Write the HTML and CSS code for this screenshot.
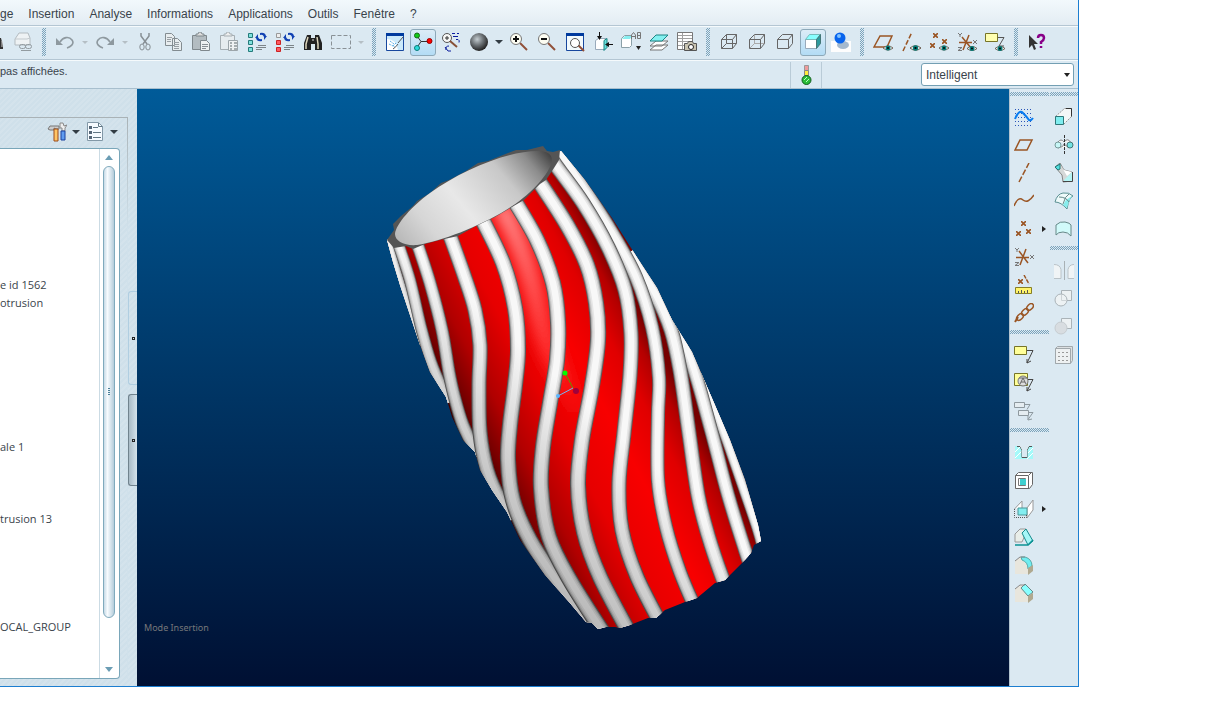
FILE: index.html
```html
<!DOCTYPE html>
<html lang="fr">

<head>
  <meta charset="UTF-8">
  <title>Mode Insertion</title>
  <link rel="stylesheet" href="styles.css">
</head>

<body>

  <svg class="defs" aria-hidden="true">
    <symbol id="eye" viewBox="0 0 12 8">
      <path d="M0 4Q6 -1 12 4Q6 9 0 4z" fill="#fff" stroke="#5c4a3c" />
      <circle cx="6" cy="4" r="3" fill="#087c78" />
      <rect x="5" y="3" width="2" height="2" fill="#000" />
    </symbol>
    <symbol id="cross" viewBox="0 0 5 5">
      <path d="M0 0L5 5M5 0L0 5" stroke="#9a5524" stroke-width="1.6" />
    </symbol>
  </svg>

  <div class="app">
    <nav class="menu">
      <a href="#">ge</a>
      <a href="#">Insertion</a>
      <a href="#">Analyse</a>
      <a href="#">Informations</a>
      <a href="#">Applications</a>
      <a href="#">Outils</a>
      <a href="#">Fenêtre</a>
      <a href="#">?</a>
    </nav>

    <div class="toolbar">
      <button aria-label="Imprimer"><svg class="icon" viewBox="0 0 20 20"><path d="M12 6l4 0l2 8v3h-6z" fill="#333" /><path d="M17 9v6" stroke="#ccc" /></svg></button>
      <button aria-label="Envoyer un lien"><svg class="icon" viewBox="0 0 20 20"><path d="M2 7L6 1h9l2 5v7H2z" fill="#eef2f4" stroke="#b3bbc0" /><path d="M2 7h12l3-1" stroke="#c2c9cd" fill="none" /><rect x="6.500" y="12.500" width="6" height="4" rx="2" fill="none" stroke="#929ba0" /><rect x="12.500" y="12.500" width="6" height="4" rx="2" fill="none" stroke="#929ba0" /><path d="M8 18.500h10" stroke="#929ba0" /></svg></button>
      <span class="sep"></span>
      <button aria-label="Annuler"><svg class="icon" viewBox="0 0 20 20"><path d="M1 6v7h7z" fill="#8e999f" /><path d="M5 10C8 5 14 4 17 8C20 12 15 15 12 16" stroke="#8e999f" stroke-width="1.6" fill="none" /></svg></button>
      <button class="drop off" aria-label="Liste annuler"></button>
      <button aria-label="Rétablir"><svg class="icon" viewBox="0 0 20 20"><path d="M19 6v7h-7z" fill="#8e999f" /><path d="M15 10C12 5 6 4 3 8C0 12 5 15 8 16" stroke="#8e999f" stroke-width="1.6" fill="none" /></svg></button>
      <button class="drop off" aria-label="Liste rétablir"></button>
      <button aria-label="Couper"><svg class="icon" viewBox="0 0 20 20"><path d="M6 1v3l6 8M14 1v3l-6 8" stroke="#878f94" stroke-width="1.5" fill="none" /><ellipse cx="7" cy="15" rx="2.2" ry="3" fill="none" stroke="#878f94" /><ellipse cx="13" cy="15" rx="2.2" ry="3" fill="none" stroke="#878f94" /></svg></button>
      <button aria-label="Copier"><svg class="icon" viewBox="0 0 20 20"><path d="M2.500 1.500h6l3 3v9h-9zM9.500 6.500h5l4 4v8h-9z" fill="#e8edef" stroke="#838c91" /><path d="M4 5.500h5M4 7.500h4M4 9.500h4M11 10.500h5M11 12.500h5M11 14.500h5M11 16.500h5" stroke="#989fa4" /></svg></button>
      <button aria-label="Coller"><svg class="icon" viewBox="0 0 20 20"><path d="M1.500 3.500h14v14h-14z" fill="#b3bcc1" stroke="#7f888d" /><path d="M5 4V2h2l1-2h2l1 2h2v2z" fill="#ddd" stroke="#7f888d" /><path d="M9.500 8.500h6l3 3v7h-9z" fill="#eef1f2" stroke="#7f888d" /><path d="M11 12.500h6M11 14.500h6M11 16.500h4" stroke="#888f94" /></svg></button>
      <button aria-label="Collage spécial"><svg class="icon" viewBox="0 0 20 20"><path d="M1.500 3.500h14v14h-14z" fill="#e6ecef" stroke="#a5aeb3" /><path d="M5 4V2h2l1-2h2l1 2h2v2z" fill="#eee" stroke="#a5aeb3" /><path d="M9.500 8.500h9v10h-9z" fill="#eef1f2" stroke="#9ca5aa" /><path d="M11 11h2M15 11h3M11 14h2M15 14h3M11 17h2M15 17h3" stroke="#5d686d" /></svg></button>
      <button aria-label="Régénérer"><svg class="icon" viewBox="0 0 20 20"><path d="M1.500 1.500h4v4h-4zM1.500 8.500h4v4h-4zM1.500 15.500h4v4h-4z" fill="#7fe0dd" stroke="#247b7b" /><path d="M11 13.500h8M9 15.500h10M9 17.500h6" stroke="#7c8488" /><path d="M8 6l3-4v3q1 3 4 2v2q-5 1-6-3zM20 4l-3 4V5q-1-3-4-2V1q5-1 6 3z" fill="#1141b3" /></svg></button>
      <button aria-label="Gestionnaire de régénération"><svg class="icon" viewBox="0 0 20 20"><path d="M1.500 1.500h4v4h-4z" fill="#eee" stroke="#999" /><path d="M1.500 8.500h4v4h-4zM1.500 15.500h4v4h-4z" fill="#ff5960" stroke="#c22" /><path d="M11 13.500h8M9 15.500h10M9 17.500h6" stroke="#7c8488" /><path d="M8 6l3-4v3q1 3 4 2v2q-5 1-6-3zM20 4l-3 4V5q-1-3-4-2V1q5-1 6 3z" fill="#1141b3" /></svg></button>
      <button aria-label="Rechercher"><svg class="icon" viewBox="0 0 20 20"><path d="M4 3h4v3h4V3h4l3 8v7h-7v-6H8v6H1v-7z" fill="#222" /><path d="M5 5l-2 7v5M14 5l1 7v5" stroke="#ddd6bd" stroke-width="1.500" fill="none" /><path d="M9 8h2" stroke="#ddd" /></svg></button>
      <button aria-label="Sélectionner"><svg class="icon" viewBox="0 0 20 20"><rect x=".5" y="3.500" width="19" height="13" fill="none" stroke="#899196" stroke-dasharray="4 2" /></svg></button>
      <button class="drop off" aria-label="Modes de sélection"></button>
      <span class="sep"></span>

      <button aria-label="Redessiner"><svg class="icon" viewBox="0 0 20 20"><path d="M1.500 1.500h17v17h-17z" fill="#cbe9fb" stroke="#17479e" /><path d="M1 1h18v3H1z" fill="#003a9e" /><path d="M2 7q9 0 11 11H2z" fill="#fff" /><path d="M5 9l4 3M4 12l6 3M11 11l-3 3" stroke="#57aee9" stroke-dasharray="2 1" /><path d="M18 5L13 11M13 12q-2 3-5 5" stroke="#555" fill="none" /></svg></button>
      <button class="on" aria-label="Centre de rotation"><svg class="icon" viewBox="0 0 20 20"><path d="M4 4l4 5.500h8M8 9.500l-4 6" stroke="#333" fill="none" /><circle cx="4" cy="3.500" r="2.500" fill="#13cb19" stroke="#176b17" /><circle cx="16.500" cy="9" r="2.500" fill="#f00" stroke="#900" /><circle cx="4" cy="16" r="2.500" fill="#2cdcdd" stroke="#087c78" /></svg></button>
      <button aria-label="Mode d'orientation"><svg class="icon" viewBox="0 0 20 20"><circle cx="6" cy="6" r="4.500" fill="#f7f7f5" stroke="#555" /><path d="M6 4v4M4 6h4" stroke="#333" /><path d="M9 9l7 6" stroke="#875037" stroke-width="2" /><path d="M11 1.500h3M16 1.500h2M12 4.500h5M15 7.500h2q2 1 1 3M5 18q-1-4 3-4M4 15l3 4h3" stroke="#0c1d9e" fill="none" /></svg></button>
      <button aria-label="Galerie d'apparences"><svg class="icon" viewBox="0 0 20 20"><circle cx="10" cy="10" r="9" fill="url(#ball)" /></svg></button>
      <button class="drop" aria-label="Liste des apparences"></button>
      <button aria-label="Zoom avant"><svg class="icon" viewBox="0 0 20 20"><path d="M11 11l7 7" stroke="#905039" stroke-width="2" /><circle cx="7" cy="7" r="5.500" fill="#fdfdf2" stroke="#777" /><path d="M4 7h6M7 4v6" stroke="#111" stroke-width="2" /></svg></button>
      <button aria-label="Zoom arrière"><svg class="icon" viewBox="0 0 20 20"><path d="M11 11l7 7" stroke="#905039" stroke-width="2" /><circle cx="7" cy="7" r="5.500" fill="#fdfdf2" stroke="#777" /><path d="M4 7h6" stroke="#111" stroke-width="2" /></svg></button>
      <button aria-label="Recadrer"><svg class="icon" viewBox="0 0 20 20"><path d="M1.500 1.500h17v17h-17z" fill="#f2fafd" stroke="#17479e" /><path d="M1 1h18v3H1z" fill="#003a9e" /><path d="M13 13l6 6" stroke="#905039" stroke-width="2" /><circle cx="10" cy="11" r="4.500" fill="#fff" stroke="#555" /></svg></button>
      <button aria-label="Réorienter"><svg class="icon" viewBox="0 0 20 20"><path d="M2.500 8.500l3-2h8v9l-2 2h-9z" fill="#fff" stroke="#9ab" /><path d="M11 8.500l3-2v9l-3 3z" fill="#6ae0dd" stroke="#1b8583" /><path d="M6.500 0v7M13 12.500h7" stroke="#111" /><path d="M4 4h5L6.500 8zM16 10v5l-4-2.500z" fill="#111" /></svg></button>
      <button aria-label="Vues enregistrées"><svg class="icon" viewBox="0 0 20 20"><path d="M.5 6.500l3-3h7v10l-2 2h-8z" fill="#fff" stroke="#8ba0a8" /><path d="M1 7l3-3h7l-2 3z" fill="#88eef0" /><path d="M10.500 7V3l2-2.500 2 2.500v4M10.500 4.500h4M16.500 6.500v-6h3v6zM16.500 3.500h3" stroke="#777" fill="none" /><path d="M15 14h5l-2.500 4z" fill="#222" /></svg></button>
      <button aria-label="Calques"><svg class="icon" viewBox="0 0 20 20"><path d="M1 18l6-5h12l-6 5zM1 14l6-5h12l-6 5z" fill="#fff" stroke="#777" /><path d="M1 9l6-6h12l-6 6z" fill="#85f1f1" stroke="#1c8585" /></svg></button>
      <button aria-label="Gestionnaire de vues"><svg class="icon" viewBox="0 0 20 20"><path d="M.5.500h15v17H.5z" fill="#fff" stroke="#777" /><path d="M1 3.500h14M1 6.500h14M1 9.500h14M1 13.500h14M5.500 1v16" stroke="#a0a0a0" /><path d="M7.500 11.500h3l1-2h4l1 2h3v7h-12z" fill="#c8c3b0" stroke="#555" /><circle cx="14" cy="15" r="2.500" fill="#fff" stroke="#222" /></svg></button>
      <span class="sep"></span>

      <button aria-label="Filaire"><svg class="icon" viewBox="0 0 20 20"><path d="M2.500 7.500h11v9h-11zM7.500 2.500h10v9h-10zM2.500 7.500l5-5M13.500 7.500l4-5M2.500 16.500l5-5M13.500 16.500l4-5" stroke="#666" fill="none" /></svg></button>
      <button aria-label="Lignes cachées"><svg class="icon" viewBox="0 0 20 20"><path d="M7.500 3v8.500h10M3 16l5-5" stroke="#aaa" fill="none" /><path d="M2.500 7.500h11v9h-11zM2.500 7.500l5-5h10v9l-4 5M13.500 7.500l4-5" stroke="#666" fill="none" /></svg></button>
      <button aria-label="Sans lignes cachées"><svg class="icon" viewBox="0 0 20 20"><path d="M2.500 7.500h11v9h-11zM2.500 7.500l5-5h10v9l-4 5M13.500 7.500l4-5" stroke="#666" fill="none" /></svg></button>
      <button class="on" aria-label="Ombrage"><svg class="icon" viewBox="0 0 20 20"><path d="M2.500 7.500h11v9h-11z" fill="#fff" stroke="#9ab" /><path d="M2.500 7.500l4-5h11l-4 5z" fill="#8ff" stroke="#7bb" /><path d="M13.500 7.500l4-5v9l-4 5z" fill="#2d9a9d" stroke="#477" /></svg></button>
      <button aria-label="Réalisme"><svg class="icon" viewBox="0 0 20 20"><path d="M0 9h20v11H0z" fill="#fdfdfd" /><ellipse cx="12" cy="13" rx="6" ry="4" fill="#a4b9ce" /><circle cx="9" cy="6" r="5.500" fill="#0864ed" /><circle cx="8" cy="4" r="2" fill="#7fc2ff" /></svg></button>
      <span class="sep"></span>

      <button aria-label="Plans de référence"><svg class="icon" viewBox="0 0 20 20"><path d="M1 15L7 4h12l-5 11z" fill="none" stroke="#9a5524" stroke-width="1.500" /><use href="#eye" x="10" y="12" width="10" height="8" /></svg></button>
      <button aria-label="Axes"><svg class="icon" viewBox="0 0 20 20"><path d="M2 19L11 0" stroke="#9a5524" stroke-width="1.500" stroke-dasharray="5 2" /><use href="#eye" x="9" y="12" width="11" height="8" /></svg></button>
      <button aria-label="Points"><svg class="icon" viewBox="0 0 20 20"><use href="#cross" x="4" y="1" width="5" height="5" /><use href="#cross" x="13" y="7" width="5" height="5" /><use href="#cross" x="1" y="11" width="5" height="5" /><use href="#eye" x="10" y="12" width="10" height="8" /></svg></button>
      <button aria-label="Repères"><svg class="icon" viewBox="0 0 20 20"><path d="M1 1l2 2 2-2M3 3v2M1 15.500h4l-4 3h4M16 8l4 4M20 8l-4 4" stroke="#777" fill="none" /><path d="M2 10.500h13M5 5l9 11M12 3L6 18" stroke="#9a5524" stroke-width="1.500" /><use href="#eye" x="10" y="13" width="10" height="7" /></svg></button>
      <button aria-label="Annotations"><svg class="icon" viewBox="0 0 20 20"><path d="M.5 1.500h12v8H.5z" fill="#ffffb0" stroke="#777528" /><path d="M13 5.500h6L14 14h5" stroke="#555" fill="none" /><use href="#eye" x="10" y="13" width="10" height="7" /></svg></button>
      <span class="sep"></span>
      <button aria-label="Aide contextuelle"><svg class="icon" viewBox="0 0 20 20"><path d="M2 3v13l3-3 2 5 2-1-2-5h4z" fill="#333" /><path d="M11 6q0-3 3-3t3 3q0 2-3 4v2M14 14v2" stroke="#808" stroke-width="2.500" fill="none" /></svg></button>
    </div>

    <div class="status">
      <p>pas affichées.</p>
      <div class="light">
        <svg class="icon" viewBox="0 0 20 20"><path d="M8.500.500h4v5h-4z" fill="#ee9b9b" stroke="#999" /><path d="M8.500 5.500h4v5h-4z" fill="#ffeb3c" stroke="#888" /><circle cx="10.500" cy="15" r="4.500" fill="#2bbd39" stroke="#115d1e" /><path d="M8 15l3-3M10 17l3-3" stroke="#bdffc1" /></svg>
      </div>
      <div class="filter">
        <select aria-label="Filtre de sélection">
          <option>Intelligent</option>
        </select>
      </div>
    </div>

    <main class="work">
      <aside class="side">
        <div class="side-panel">
          <div class="side-tools">
            <button aria-label="Réglages"><svg class="icon" viewBox="0 0 20 20"><path d="M1 7l2-3h9v3H9l-2-1v2H3z" fill="#ccc" stroke="#777" /><path d="M7 7h4v12H7z" fill="#ffc565" stroke="#9b4a1b" /><path d="M13 1v5h2v3h3V6l2-3-3 1-1-3z" fill="#eee" stroke="#888" /><path d="M14 9h4v9h-4z" fill="#5f9cf0" stroke="#1b419d" /></svg></button>
            <button class="drop" aria-label="Liste des réglages"></button>
            <button aria-label="Afficher"><svg class="icon" viewBox="0 0 20 20"><path d="M2.500.500h11l4 4v14h-15z" fill="#f6fbff" stroke="#8298a7" /><path d="M13.500 1v3.500h4M8 5.500h5M8 10.500h8M8 15.500h8" stroke="#607784" fill="none" /><path d="M4 4h3v3H4zM4 9h3v3H4zM4 14h3v3H4z" fill="#567" /></svg></button>
            <button class="drop" aria-label="Liste afficher"></button>
          </div>
          <div class="tree">
            <ul>
              <li>e id 1562</li>
              <li>otrusion</li>
              <li>ale 1</li>
              <li>trusion 13</li>
              <li>OCAL_GROUP</li>
            </ul>
            <div class="scroll">
              <button class="up" aria-label="Monter"></button>
              <div class="thumb"><span></span></div>
              <button class="down" aria-label="Descendre"></button>
            </div>
          </div>
        </div>
        <div class="grips">
          <button aria-label="Ouvrir le volet"></button>
          <button class="dark" aria-label="Fermer le volet"></button>
        </div>
      </aside>

      <svg class="view" viewBox="137 89 872 597" role="img" aria-label="Gobelet torsadé rouge et blanc">
        <defs>
          <radialGradient id="ball" cx=".4" cy=".35" r=".65">
            <stop offset="0" stop-color="#c4ccd0" />
            <stop offset=".5" stop-color="#6d7377" />
            <stop offset="1" stop-color="#222" />
          </radialGradient>
          <linearGradient id="red" gradientUnits="userSpaceOnUse" x1="435" y1="388" x2="626" y2="287">
            <stop offset="0" stop-color="#300" />
            <stop offset=".1" stop-color="#700" />
            <stop offset=".22" stop-color="#b00000" />
            <stop offset=".42" stop-color="#e60000" />
            <stop offset=".65" stop-color="#f80000" />
            <stop offset=".82" stop-color="#e00000" />
            <stop offset=".93" stop-color="#b40000" />
            <stop offset="1" stop-color="#700" />
          </linearGradient>
          <linearGradient id="hole" gradientUnits="userSpaceOnUse" x1="410" y1="260" x2="548" y2="145">
            <stop offset="0" stop-color="#b5b5b5" />
            <stop offset=".2" stop-color="#d6d6d6" />
            <stop offset=".42" stop-color="#e8e8e8" />
            <stop offset=".7" stop-color="#c8c8c8" />
            <stop offset=".86" stop-color="#8c8c8c" />
            <stop offset="1" stop-color="#333" />
          </linearGradient>
          <linearGradient id="shade" gradientUnits="userSpaceOnUse" x1="450" y1="500" x2="560" y2="380">
            <stop offset="0" stop-color="#000" stop-opacity=".26" />
            <stop offset=".5" stop-color="#000" stop-opacity=".14" />
            <stop offset="1" stop-color="#000" stop-opacity="0" />
          </linearGradient>
          <linearGradient id="shine" gradientUnits="userSpaceOnUse" x1="0" y1="205" x2="0" y2="430">
            <stop offset="0" stop-color="#ff8c8c" />
            <stop offset=".4" stop-color="#ff5050" />
            <stop offset=".7" stop-color="#ff2828" />
            <stop offset="1" stop-color="#ff1010" stop-opacity="0" />
          </linearGradient>
          <filter id="soft" x="-50%" y="-50%" width="200%" height="200%">
            <feGaussianBlur stdDeviation="7" />
          </filter>
          <clipPath id="cup">
            <path d="M387 240L393 262L400 285L410 315L420 345L430 372L446 397L452 417L463 440L475 452L480 470L492 490L507 512L520 540L545 575L570 603L586 622L592 623L598 629L606 627L615 627L620 628L630 625L648 618L656 618L665 610L685 602L697 598L715 583L725 580L730 575L743 562L751 553L754 545L761 541L758 525L745 480L730 440L705 382L692 352L672 320L657 288L640 262L612 218L585 180L561 151z" />
          </clipPath>
        </defs>
        <g clip-path="url(#cup)">
          <path fill="url(#red)" d="M380 140H770V640H380z" />
          <path class="glow" d="M500 205Q526 250 538 310T590 430" filter="url(#soft)" />
          <g id="ribs"></g>
        </g>
        <path fill="#555" d="M387 240L394 230L393 224L401 216L413 206L417 201L430 193L441 183L449 180L466 171L478 163L488 161L508 153L516 150L527 150L543 146L547 151L553 152L560 150L559 160L554 168L546 180L540 184L524 200L512 207L495 217L476 226L458 236L440 240L425 244L413 249L406 246L394 248z" />
        <path fill="url(#hole)" d="M395 234C396 224 412 206 430 193C463 169 510 150 540 151C552 152 553 158 551 164C547 177 528 197 506 210C478 227 442 241 417 245C404 246 395 241 395 234z" />
        <path d="M565 373L573 388" stroke="#5b9a00" />
        <path d="M558 396L573 388" stroke="#74b6f5" />
        <circle cx="565" cy="373" r="2.500" fill="#0f0" />
        <circle cx="558" cy="396" r="2" fill="#5cb6ff" />
        <circle cx="576" cy="391" r="3" fill="#a0003c" />
        <text class="mode" x="144" y="631">Mode Insertion</text>
      </svg>

      <div class="tools-right">
        <div class="col">
          <span class="hsep"></span>
          <div class="tool"><button aria-label="Style"><svg class="icon" viewBox="0 0 20 20"><path d="M1 2.500h18M1 6.500h18M1 10.500h18M1 14.500h18M1 18.500h18" stroke="#2955b8" stroke-dasharray="1 2" /><path d="M1 12Q5 2 9 6T15 13Q17 14 19 11" stroke="#087cf0" stroke-width="2" fill="none" /></svg></button></div>
          <div class="tool"><button aria-label="Plan de référence"><svg class="icon" viewBox="0 0 20 20"><path d="M1 15L6 5h12l-5 10z" fill="none" stroke="#9a5524" stroke-width="1.500" /></svg></button></div>
          <div class="tool"><button aria-label="Axe de référence"><svg class="icon" viewBox="0 0 20 20"><path d="M5 19L15 0" stroke="#9a5524" stroke-width="1.500" stroke-dasharray="6 2" /></svg></button></div>
          <div class="tool"><button aria-label="Esquisse"><svg class="icon" viewBox="0 0 20 20"><path d="M0 15Q4 5 9 9T20 4" stroke="#9a5524" stroke-width="1.500" fill="none" /></svg></button></div>
          <div class="tool"><button aria-label="Point de référence"><svg class="icon" viewBox="0 0 20 20"><use href="#cross" x="7" y="2" width="5" height="5" /><use href="#cross" x="2" y="12" width="5" height="5" /><use href="#cross" x="12" y="10" width="5" height="5" /></svg></button><button class="more" aria-label="Autres points"></button></div>
          <div class="tool"><button aria-label="Repère"><svg class="icon" viewBox="0 0 20 20"><path d="M1 1l2 2 2-2M3 3v2M1 15.500h4l-4 3h4M16 8l4 4M20 8l-4 4" stroke="#777" fill="none" /><path d="M2 10.500h13M5 4l9 12M12 2L6 18" stroke="#9a5524" stroke-width="1.500" /></svg></button></div>
          <div class="tool"><button aria-label="Analyse"><svg class="icon" viewBox="0 0 20 20"><use href="#cross" x="4" y="4" width="5" height="5" /><path d="M10 0l5 9" stroke="#9a5524" stroke-width="1.500" stroke-dasharray="4 1" /><path d="M1.500 12.500h16v6h-16z" fill="#fff46a" stroke="#877f25" /><path d="M4.500 18v-2M7.500 18v-3M10.500 18v-2M13.500 18v-3" stroke="#555" /></svg></button></div>
          <div class="tool"><button aria-label="Référence"><svg class="icon" viewBox="0 0 20 20"><path d="M1 19l3-5" stroke="#9a5524" stroke-width="2" /><g fill="none" stroke="#9a5524" stroke-width="1.500"><ellipse cx="6" cy="14" rx="4" ry="2.500" transform="rotate(-45 6 14)" /><ellipse cx="11" cy="9" rx="4" ry="2.500" transform="rotate(-45 11 9)" /><ellipse cx="16" cy="4" rx="4" ry="2.500" transform="rotate(-45 16 4)" /></g></svg></button></div>
          <span class="hsep"></span>
          <div class="tool"><button aria-label="Note"><svg class="icon" viewBox="0 0 20 20"><path d="M.5 1.500h12v8H.5z" fill="#ffff99" stroke="#777528" /><path d="M13 5.500h6L13 18M13 14v4l4-2" stroke="#444" fill="none" /></svg></button></div>
          <div class="tool"><button aria-label="Annotation"><svg class="icon" viewBox="0 0 20 20"><path d="M.5.500h13v12H.5z" fill="#ffff99" stroke="#777528" /><circle cx="9" cy="8" r="5" fill="#ddd" stroke="#777" /><path d="M6 11l3-6 3 6M7 9h4M5 5h8" stroke="#666" fill="none" /><path d="M14 6.500h5L13 18M13 14v4l4-2" stroke="#444" fill="none" /></svg></button></div>
          <div class="tool"><button aria-label="Propager"><svg class="icon" viewBox="0 0 20 20"><path d="M.5 1.500h10v5H.5zM4.500 9.500h10v5h-10z" fill="#e5edf1" stroke="#8e999f" /><path d="M11 3.500h5l-3 5M15 11.500h4l-5 7M14 15v4l4-1" stroke="#8e999f" fill="none" /></svg></button></div>
          <span class="hsep"></span>
          <div class="tool"><button aria-label="Perçage"><svg class="icon" viewBox="0 0 20 20"><path d="M1 3h18v13H1z" fill="#a5fafa" /><path d="M1 9l6-6M1 15l7-7M14 10l5-5M13 16l6-6" stroke="#fff" /><path d="M3 3.500h3l2 4v7h5v-7l2-4h3" fill="none" stroke="#555" /><path d="M6 3h9l-2 4v7H8V7z" fill="#dbe9f1" /></svg></button></div>
          <div class="tool"><button aria-label="Coque"><svg class="icon" viewBox="0 0 20 20"><path d="M1.500 4.500l3-3h14v12l-3 4h-14z" fill="#fff" stroke="#666" /><path d="M1.500 4.500h13v13M15 4l3-3" stroke="#666" fill="none" /><path d="M4.500 7.500h7v7h-7z" fill="#fff" stroke="#777" /><path d="M6 8h6v6H6z" fill="#3fd0d0" /></svg></button></div>
          <div class="tool"><button aria-label="Nervure"><svg class="icon" viewBox="0 0 20 20"><path d="M.5 10L8 2v7M13 9l6-8v10l-6 8z" fill="#fff" stroke="#999" /><path d="M4 9h9v7H4z" fill="#83eef0" stroke="#4b9698" /><path d="M.5 10v8.500h12V16" fill="none" stroke="#555" stroke-dasharray="1 1" /></svg></button><button class="more" aria-label="Autres nervures"></button></div>
          <div class="tool"><button aria-label="Dépouille"><svg class="icon" viewBox="0 0 20 20"><path d="M1 7l5-5h6v4l-4 9H1z" fill="#e9eee9" stroke="#999" /><path d="M8 6l4-4 7 12-5 4z" fill="#a6f7f7" stroke="#178a8c" /><path d="M1 18h13l5-5" stroke="#0b9294" stroke-width="1.500" fill="none" /></svg></button></div>
          <div class="tool"><button aria-label="Arrondi"><svg class="icon" viewBox="0 0 20 20"><path d="M1 6l5-4h6q7 2 7 12l-5 5H1z" fill="#e8e6dd" /><path d="M7 2h4q7 2 7 9l-4 3q0-7-6-9z" fill="#70edf0" stroke="#5aa" /><path d="M14 13l5-3v6l-5 4z" fill="#b0a990" /><path d="M1 6l5-4h5" stroke="#888" fill="none" /></svg></button></div>
          <div class="tool"><button aria-label="Chanfrein"><svg class="icon" viewBox="0 0 20 20"><path d="M1 6l5-4h6l7 8v5l-5 4H1z" fill="#e8e6dd" /><path d="M7 5l4-4 8 8-5 4z" fill="#8ff" stroke="#688" /><path d="M14 13l5-3v6l-5 4z" fill="#b0a990" /><path d="M1 6l5-4h5" stroke="#888" fill="none" /></svg></button></div>
        </div>
        <div class="col">
          <span class="hsep"></span>
          <div class="tool"><button aria-label="Extrusion"><svg class="icon" viewBox="0 0 20 20"><path d="M1.500 9.500l9-8h7v8l-8 8z" fill="#f4f7f7" stroke="#999" stroke-dasharray="2 1" /><path d="M12 1.500h5.500v8" stroke="#333" fill="none" /><path d="M1.500 9.500h8v8h-8z" fill="#7fedef" stroke="#2f7678" /></svg></button></div>
          <div class="tool"><button aria-label="Révolution"><svg class="icon" viewBox="0 0 20 20"><path d="M4 7Q7 3 10 7Q14 2 17 8M4 13Q10 12 10 9L15 13" fill="#f3f6f6" stroke="#888" /><circle cx="4" cy="10" r="3" fill="#c7f6f6" stroke="#799" /><circle cx="16" cy="10" r="3" fill="#72e3e3" stroke="#477" /><path d="M10.500 0v20" stroke="#333" stroke-dasharray="3 1" /></svg></button></div>
          <div class="tool"><button aria-label="Balayage à sections variables"><svg class="icon" viewBox="0 0 20 20"><path d="M1 4l5-4 4 7 8 2v9l-9 1-1-7z" fill="#d5d8d8" stroke="#888" /><path d="M6 1l4 6 8 2-5 4z" fill="#fff" /><path d="M1 4l5-3v5l-2 1z" fill="#52dfdf" stroke="#277" /><path d="M10 17l8-8v9l-8 .5z" fill="#b5f4f4" /><path d="M18.500 9v9.500H9" stroke="#444" fill="none" /></svg></button></div>
          <div class="tool"><button aria-label="Mélange des frontières"><svg class="icon" viewBox="0 0 20 20"><path d="M1 11Q3 3 9 2Q15 1 19 5Q15 6 13 18Q7 11 1 11z" fill="#eefafa" stroke="#5a9092" /><path d="M12 9L18 5Q15 9 13 17L9 14z" fill="#87ecec" /><path d="M5 6q7 0 10 5M9 13q2-8 6-10" stroke="#688" fill="none" /></svg></button></div>
          <div class="tool"><button aria-label="Remplir"><svg class="icon" viewBox="0 0 20 20"><path d="M2 16V6Q6 2 11 3T17 6V17Q14 13 9 13T2 16z" fill="#d1fafa" stroke="#688" /></svg></button></div>
          <span class="hsep"></span>
          <div class="tool"><button aria-label="Miroir"><svg class="icon" viewBox="0 0 20 20"><path d="M0 3.500q6 0 7 5v9H0M20 3.500q-5 0-6 5v9h6" fill="#f0f4f6" stroke="#b9c2c7" /><path d="M10.500 0v19" stroke="#a8b1b5" /></svg></button></div>
          <div class="tool"><button aria-label="Fusionner"><svg class="icon" viewBox="0 0 20 20"><path d="M7.500 1.500h10v10h-10z" fill="#ecf1f3" stroke="#aab3b8" /><circle cx="7" cy="11" r="6" fill="#edf2f4" stroke="#aab3b8" /><path d="M7.500 6v5.500H13" fill="none" stroke="#ced4d7" /></svg></button></div>
          <div class="tool"><button aria-label="Ajuster"><svg class="icon" viewBox="0 0 20 20"><path d="M7.500 1.500h10v10h-10z" fill="#ecf1f3" stroke="#aab3b8" /><circle cx="7" cy="11" r="6" fill="#d8dde1" stroke="#c6ccd0" /></svg></button></div>
          <div class="tool"><button aria-label="Répétition"><svg class="icon" viewBox="0 0 20 20"><path d="M1.500 3.500l2-2h15v14l-2 3h-15z" fill="#dce0e2" stroke="#a1a8ac" /><path d="M1.500 3.500h15v15h-15z" fill="#eef1f2" stroke="#a1a8ac" /><path d="M4 7.500h10M4 11.500h10M4 15.500h10" stroke="#999" stroke-dasharray="2 2" /></svg></button></div>
        </div>
      </div>
    </main>
  </div>

  <script>
    // centre line and width of each rib, hidden ones first
    const ribs = [
      [9, [387, 236, 394, 262, 401, 285, 410, 313, 422, 345]],
      [12, [398, 243, 410, 280, 421, 327, 431, 362, 442, 388, 450, 402]],
      [13, [417, 243, 430, 283, 442, 330, 449, 372, 454, 395, 463, 425, 478, 456]],
      [11, [700, 374, 722, 427, 742, 484, 757, 528, 763, 550]],
      [14, [671, 315, 691, 360, 711, 430, 728, 495, 745, 550, 752, 570]],
      [15, [630, 252, 656, 295, 671, 330, 680, 370, 689, 433, 698, 495, 708, 535, 722, 577, 728, 590]],
      [14, [556, 146, 583, 187, 611, 231, 636, 277, 652, 327, 659, 377, 658, 415, 658, 480, 666, 527, 680, 572, 696, 610]],
      [15, [545, 150, 557, 167, 583, 203, 608, 247, 625, 290, 631, 333, 630, 375, 624, 433, 619, 483, 622, 530, 637, 577, 664, 630]],
      [15, [449, 233, 464, 275, 475, 310, 480, 345, 479, 385, 480, 432, 487, 470, 500, 500, 514, 518]],
      [16, [481, 217, 503, 263, 515, 308, 518, 350, 515, 385, 510, 425, 508, 460, 513, 500, 530, 540, 558, 583, 592, 632]],
      [16, [514, 200, 537, 240, 553, 283, 558, 322, 557, 360, 550, 403, 543, 447, 541, 488, 549, 537, 570, 580, 604, 634]],
      [16, [538, 180, 567, 225, 587, 265, 596, 303, 598, 340, 592, 386, 582, 440, 578, 485, 584, 532, 600, 577, 631, 636]]
    ]
    const layers = [["#5c5c5c", 1], ["#a4a4a4", .88], ["#cfcfcf", .76], ["#e6e6e6", .6], ["#f8f8f8", .4]]

    // smooth curve through the points
    const curve = p => {
      const n = p.length / 2
      const at = i => { i = Math.max(0, Math.min(n - 1, i)); return [p[i * 2], p[i * 2 + 1]] }
      let d = `M${at(0)}`
      for (let i = 0; i < n - 1; i++) {
        const [a, b, c, e] = [at(i - 1), at(i), at(i + 1), at(i + 2)]
        d += `C${b[0] + (c[0] - a[0]) / 6} ${b[1] + (c[1] - a[1]) / 6} ${c[0] - (e[0] - b[0]) / 6} ${c[1] - (e[1] - b[1]) / 6} ${c}`
      }
      return d
    }

    document.querySelector("#ribs").innerHTML = ribs.map(([width, points]) => {
      const d = curve(points)
      return layers.map(([color, part]) => `<path d="${d}" fill="none" stroke="${color}" stroke-width="${width * part}"/>`).join("")
        + `<path d="${d}" fill="none" stroke="url(#shade)" stroke-width="${width}"/>`
    }).join("")
  </script>
</body>

</html>
```
FILE: styles.css
```css
*,
*::after {
  box-sizing: border-box;
}

body {
  margin: 0;
  background-color: #ffffff;
  color: #39434b;
  font-family: "Liberation Sans", Arial, sans-serif;
  font-size: 12px;
}

button {
  padding: 0;
  border: 0 none;
  background: none;
}

.defs {
  position: absolute;
  width: 0;
  height: 0;
}

.icon {
  display: block;
  width: 20px;
  height: 20px;
}

.app {
  display: flex;
  flex-direction: column;
  height: calc(100vh - 34px);
  margin-right: 150px;
  border-right: 1px solid #1c7ed0;
  border-bottom: 1px solid #1c7ed0;
  background-color: #dbe9f2;
  overflow: hidden;
}

/* MENU */

.menu {
  display: flex;
  gap: 15px;
  height: 26px;
  border-bottom: 1px solid #b4c6d3;
  background: linear-gradient(#f2f9fc, #e3ecf3);
  line-height: 28px;
}

.menu a {
  color: inherit;
  text-decoration: none;
}

/* TOOLBAR */

.toolbar {
  display: flex;
  align-items: center;
  height: 34px;
  margin-left: -19px;
  padding-bottom: 2px;
  border-top: 1px solid #f5fafc;
  border-bottom: 1px solid #b4c6d3;
}

.toolbar button {
  display: flex;
  flex: none;
  align-items: center;
  justify-content: center;
  width: 28px;
  height: 28px;
}

.toolbar .on {
  width: 26px;
  height: 27px;
  margin: 0 1px;
  border: 1px solid #8da9b9;
  border-radius: 3px;
  background: linear-gradient(#dcecf7, #b3dcf5);
}

.toolbar .drop,
.side-tools .drop {
  width: 12px;
}

.drop::after {
  content: "";
  border: 4px solid transparent;
  border-top-color: #333d44;
  border-bottom: 0 none;
}

.off::after {
  border-width: 3px;
  border-top-color: #b5bfc5;
}

.sep {
  flex: none;
  width: 4px;
  height: 28px;
  margin: 0 5px;
  background: repeating-conic-gradient(#7ba3bb 0 25%, #dbe9f2 0 50%) 0 0 / 2px 2px;
}

/* STATUS */

.status {
  display: flex;
  align-items: center;
  height: 29px;
  padding-right: 4px;
  border-top: 1px solid #f5fafc;
  border-bottom: 1px solid #a8bfce;
}

.status p {
  flex: 1;
  margin: 0 0 8px;
  font-size: 11px;
}

.light {
  margin-right: 99px;
  padding: 3px 5px;
  border-right: 1px solid #b9cbd7;
  border-left: 1px solid #b9cbd7;
}

.filter {
  position: relative;
  width: 153px;
}

.filter select {
  width: 100%;
  height: 23px;
  padding: 0 4px;
  border: 1px solid #739fb3;
  border-radius: 3px;
  background-color: #ffffff;
  color: inherit;
  font: inherit;
  appearance: none;
}

.filter::after {
  content: "";
  position: absolute;
  top: 10px;
  right: 4px;
  border: 3px solid transparent;
  border-top: 4px solid #222;
  border-bottom: 0 none;
}

/* WORK AREA */

.work {
  display: flex;
  flex: 1;
  min-height: 0;
}

.side {
  display: flex;
  flex: none;
  width: 137px;
  padding: 28px 0 7px;
  background: repeating-linear-gradient(135deg, #cfe0ea 0 2px, #d4e3ec 2px 4px);
}

.side-panel {
  display: flex;
  flex-direction: column;
  width: 128px;
  padding-right: 7px;
  border: 1px solid #a9b2b6;
  border-width: 1px 1px 0 0;
  border-image: linear-gradient(#a9b2b6, #d0e1eb 20%) 1;
}

.side-tools {
  display: flex;
  align-items: center;
  justify-content: flex-end;
  gap: 3px;
  height: 30px;
  padding-bottom: 2px;
}

.side-tools button {
  display: flex;
  align-items: center;
  justify-content: center;
}

.tree {
  display: flex;
  flex: 1;
  min-height: 0;
  border: 1px solid #79a6b9;
  border-left: 0 none;
  border-radius: 0 4px 4px 0;
  background-color: #ffffff;
}

.tree ul {
  display: grid;
  flex: 1;
  grid-auto-rows: 18px;
  align-content: start;
  margin: 0;
  padding: 1px 0 0;
  list-style: none;
  font-family: "Open Sans", sans-serif;
  font-size: 11px;
  line-height: 18px;
  white-space: nowrap;
  overflow: hidden;
}

.tree li:nth-child(1) {
  grid-row: 8;
}

.tree li:nth-child(2) {
  grid-row: 9;
}

.tree li:nth-child(3) {
  grid-row: 17;
}

.tree li:nth-child(4) {
  grid-row: 21;
}

.tree li:nth-child(5) {
  grid-row: 27;
}

.scroll {
  display: flex;
  flex-direction: column;
  align-items: center;
  width: 20px;
  padding-right: 1px;
  border-left: 1px solid #cbdbe4;
}

.scroll button {
  flex: none;
  width: 0;
  margin: 6px 0;
  border: 4px solid transparent;
}

.scroll .up {
  border-top: 0 none;
  border-bottom: 5px solid #6b9db4;
}

.scroll .down {
  border-top: 5px solid #6b9db4;
  border-bottom: 0 none;
}

.thumb {
  display: flex;
  flex: 1;
  align-items: center;
  justify-content: center;
  width: 12px;
  margin-bottom: 43px;
  border: 1px solid #80aabd;
  border-radius: 6px;
  background: linear-gradient(to right, #c7dae6, #f7fbfe 35%, #b4ccda);
}

.thumb span {
  width: 2px;
  height: 8px;
  background: repeating-linear-gradient(#4b8099 0 1px, transparent 1px 2px);
}

.grips {
  display: flex;
  flex: 1;
  flex-direction: column;
  gap: 9px;
  padding-top: 174px;
}

.grips button {
  display: flex;
  align-items: center;
  justify-content: center;
  height: 94px;
  border: 1px solid #b0cee1;
  border-right: 0 none;
  border-radius: 3px 0 0 3px;
}

.grips .dark {
  height: 92px;
  border-color: #71838e;
  background: linear-gradient(to right, #a9bbc6, #d4e3ec);
}

.grips button::after {
  content: "";
  width: 3px;
  height: 3px;
  border: 1px solid #222;
}

/* 3D VIEW */

.view {
  flex: 1;
  min-width: 0;
  height: 100%;
  background: linear-gradient(#005b99, #003767 48%, #001033);
}

.glow {
  fill: none;
  stroke: url(#shine);
  stroke-width: 20px;
}

.mode {
  fill: #77777a;
  font-family: "Noto Sans", sans-serif;
  font-size: 9px;
}

/* RIGHT TOOLS */

.tools-right {
  display: flex;
  flex: none;
  width: 69px;
  gap: 1px;
  border-left: 1px solid #b2c3cf;
}

.col {
  flex: 28;
}

.col:first-child {
  flex: 39;
}

.hsep {
  display: block;
  height: 4px;
  margin: 3px 0 7px;
  background: repeating-conic-gradient(#7ba3bb 0 25%, #dbe9f2 0 50%) 0 0 / 2px 2px;
}

.tool {
  display: flex;
  align-items: center;
  gap: 8px;
  height: 28px;
  padding-left: 4px;
}

.more {
  border: 3px solid transparent;
  border-left: 4px solid #222;
  border-right: 0 none;
}
```
